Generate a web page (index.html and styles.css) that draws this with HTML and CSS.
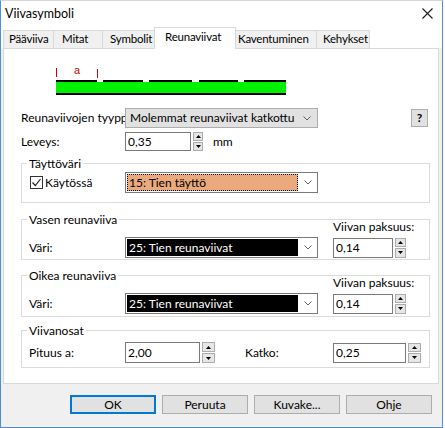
FILE: index.html
```html
<!DOCTYPE html>
<html>
<head>
<meta charset="utf-8">
<link rel="stylesheet" href="styles.css">
</head>
<body>
<div class="window">
  <div class="titlebar">
    <span class="title">Viivasymboli</span>
    <svg class="close" width="11" height="11" viewBox="0 0 11 11"><path d="M0.5 0.5 L10.5 10.5 M10.5 0.5 L0.5 10.5" stroke="#1a1a1a" stroke-width="1.1" fill="none"/></svg>
  </div>
  <div class="tabs">
    <div class="tab t1">Pääviiva</div>
    <div class="tab t2">Mitat</div>
    <div class="tab t3">Symbolit</div>
    <div class="tab t4 active">Reunaviivat</div>
    <div class="tab t5">Kaventuminen</div>
    <div class="tab t6">Kehykset</div>
  </div>
  <div class="panel">
    <svg class="preview" width="240" height="36" viewBox="0 0 240 36">
      <rect x="6" y="8" width="1" height="9" fill="#d40000"/>
      <text x="24" y="14" font-family="Liberation Sans, sans-serif" font-size="11" fill="#d40000">a</text>
      <rect x="47" y="9" width="1" height="9" fill="#d40000"/>
      <rect x="6" y="20" width="230" height="15" fill="#000"/>
      <rect x="6" y="22" width="230" height="11" fill="#00f000"/>
      <rect x="47" y="20" width="6" height="2" fill="#eef8ee"/>
      <rect x="93" y="20" width="6" height="2" fill="#eef8ee"/>
      <rect x="142" y="20" width="7" height="2" fill="#eef8ee"/>
      <rect x="188" y="20" width="6" height="2" fill="#eef8ee"/>
    </svg>

    <div class="row row-type">
      <span class="lbl lbl-top">Reunaviivojen tyypp</span>
      <div class="combo combo-gray">
        <span class="combo-text">Molemmat reunaviivat katkottu</span>
        <svg class="chev" width="8" height="5" viewBox="0 0 8 5"><path d="M0.5 0.5 L4 4 L7.5 0.5" stroke="#606060" fill="none"/></svg>
      </div>
      <div class="help">?</div>
    </div>

    <div class="row row-width">
      <span class="lbl lbl-top">Leveys:</span>
      <div class="spinfield sf-width">
        <div class="input">0,35</div>
        <div class="spinner sp-small">
          <div class="sbtn"><svg width="5" height="3" viewBox="0 0 5 3"><path d="M0 3 L2.5 0 L5 3Z" fill="#000"/></svg></div>
          <div class="sbtn"><svg width="5" height="3" viewBox="0 0 5 3"><path d="M0 0 L2.5 3 L5 0Z" fill="#000"/></svg></div>
        </div>
      </div>
      <span class="unit">mm</span>
    </div>

    <fieldset class="group g1">
      <legend>Täyttöväri</legend>
      <div class="grid">
        <div class="check">
          <span class="box"><svg width="11" height="11" viewBox="0 0 11 11"><path d="M1.5 5.5 L4.3 8.5 L9.5 2" stroke="#222" stroke-width="1.2" fill="none"/></svg></span>
          <span>Käytössä</span>
        </div>
        <div class="combo combo-color">
          <span class="swatch orange">15: Tien täyttö</span>
          <svg class="chev" width="8" height="5" viewBox="0 0 8 5"><path d="M0.5 0.5 L4 4 L7.5 0.5" stroke="#606060" fill="none"/></svg>
        </div>
      </div>
    </fieldset>

    <fieldset class="group g2">
      <legend>Vasen reunaviiva</legend>
      <div class="grid grid-two">
        <span class="lbl-thick">Viivan paksuus:</span>
        <span class="lbl">Väri:</span>
        <div class="combo combo-color">
          <span class="swatch black">25: Tien reunaviivat</span>
          <svg class="chev" width="8" height="5" viewBox="0 0 8 5"><path d="M0.5 0.5 L4 4 L7.5 0.5" stroke="#606060" fill="none"/></svg>
        </div>
        <div class="spinfield sf-thick">
          <div class="input">0,14</div>
          <div class="spinner">
            <div class="sbtn"><svg width="5" height="3" viewBox="0 0 5 3"><path d="M0 3 L2.5 0 L5 3Z" fill="#000"/></svg></div>
            <div class="sbtn"><svg width="5" height="3" viewBox="0 0 5 3"><path d="M0 0 L2.5 3 L5 0Z" fill="#000"/></svg></div>
          </div>
        </div>
      </div>
    </fieldset>

    <fieldset class="group g3">
      <legend>Oikea reunaviiva</legend>
      <div class="grid grid-two">
        <span class="lbl-thick">Viivan paksuus:</span>
        <span class="lbl">Väri:</span>
        <div class="combo combo-color">
          <span class="swatch black">25: Tien reunaviivat</span>
          <svg class="chev" width="8" height="5" viewBox="0 0 8 5"><path d="M0.5 0.5 L4 4 L7.5 0.5" stroke="#606060" fill="none"/></svg>
        </div>
        <div class="spinfield sf-thick">
          <div class="input">0,14</div>
          <div class="spinner">
            <div class="sbtn"><svg width="5" height="3" viewBox="0 0 5 3"><path d="M0 3 L2.5 0 L5 3Z" fill="#000"/></svg></div>
            <div class="sbtn"><svg width="5" height="3" viewBox="0 0 5 3"><path d="M0 0 L2.5 3 L5 0Z" fill="#000"/></svg></div>
          </div>
        </div>
      </div>
    </fieldset>

    <fieldset class="group g4">
      <legend>Viivanosat</legend>
      <div class="grid grid-parts">
        <span class="lbl">Pituus a:</span>
        <div class="spinfield sf-len">
          <div class="input">2,00</div>
          <div class="spinner">
            <div class="sbtn"><svg width="5" height="3" viewBox="0 0 5 3"><path d="M0 3 L2.5 0 L5 3Z" fill="#000"/></svg></div>
            <div class="sbtn"><svg width="5" height="3" viewBox="0 0 5 3"><path d="M0 0 L2.5 3 L5 0Z" fill="#000"/></svg></div>
          </div>
        </div>
        <span class="lbl lbl-katko">Katko:</span>
        <div class="spinfield sf-thick">
          <div class="input">0,25</div>
          <div class="spinner">
            <div class="sbtn"><svg width="5" height="3" viewBox="0 0 5 3"><path d="M0 3 L2.5 0 L5 3Z" fill="#000"/></svg></div>
            <div class="sbtn"><svg width="5" height="3" viewBox="0 0 5 3"><path d="M0 0 L2.5 3 L5 0Z" fill="#000"/></svg></div>
          </div>
        </div>
      </div>
    </fieldset>
  </div>

  <div class="buttons">
    <div class="btn default">OK</div>
    <div class="btn">Peruuta</div>
    <div class="btn">Kuvake...</div>
    <div class="btn">Ohje</div>
  </div>
</div>
</body>
</html>
```

FILE: styles.css
```css
* { box-sizing: border-box; }
html, body { margin: 0; padding: 0; }
body {
  width: 445px;
  height: 428px;
  overflow: hidden;
  background: #ffffff;
  font-family: Lato, "Liberation Sans", sans-serif;
  font-size: 12px;
  color: #000;
}
.window {
  width: 443px;
  height: 428px;
  border: 1px solid #4a90d9;
  border-top-color: #d6d6d6;
  background: #f0f0f0;
  display: flex;
  flex-direction: column;
}
.titlebar {
  height: 26px;
  background: #ffffff;
  display: flex;
  align-items: center;
  justify-content: space-between;
  padding: 0 9px 1px 4px;
  flex: none;
}
.title { font-size: 12.5px; line-height: 16px; }
.close { display: block; }

.tabs {
  height: 21px;
  display: flex;
  align-items: flex-end;
  padding-left: 2px;
  background: #ffffff;
  flex: none;
}
.tab {
  height: 18px;
  line-height: 16px;
  font-size: 11.5px;
  letter-spacing: -0.2px;
  background: #f0f0f0;
  border: 1px solid #d9d9d9;
  border-bottom: none;
  padding-left: 5px;
  white-space: nowrap;
  overflow: hidden;
  margin-left: -1px;
}
.t1 { width: 51px; margin-left: 0; }
.t2 { width: 50px; padding-left: 8px; }
.t3 { width: 54px; padding-left: 7px; }
.t4 { width: 82px; }
.t5 { width: 84px; padding-left: 4px; }
.t6 { width: 54px; padding-left: 6px; }
.tab.active {
  height: 22px;
  background: #ffffff;
  margin: 0 -2px -1px -2px;
  padding-left: 10px;
  line-height: 18px;
  position: relative;
  z-index: 1;
}

.panel {
  flex: none;
  height: 336px;
  margin: 0 3px 0 2px;
  background: #ffffff;
  border: 1px solid #d9d9d9;
  padding: 0;
}
.preview {
  display: block;
  margin: 11px 0 0 46px;
}

.row {
  display: flex;
  align-items: center;
  padding-left: 17px;
}
.row-type { height: 20px; margin-top: 12px; padding-right: 10px; }
.row-width { height: 19px; margin-top: 4px; }
.lbl { white-space: nowrap; line-height: 16px; }
.lbl-top { width: 104px; flex: none; }

.combo {
  width: 193px;
  height: 20px;
  display: flex;
  align-items: center;
  flex: none;
}
.combo-gray {
  background: #e1e1e1;
  border: 1px solid #adadad;
  padding: 0 6px 0 4px;
  justify-content: space-between;
}
.combo-text { line-height: 16px; white-space: nowrap; }
.chev { display: block; flex: none; }
.combo-color {
  height: 21px;
  background: #ffffff;
  border: 1px solid #7a7a7a;
  padding: 1px 5px 1px 1px;
  justify-content: space-between;
}
.swatch {
  width: 171px;
  height: 17px;
  line-height: 15px;
  padding-left: 1px;
  white-space: nowrap;
  overflow: hidden;
}
.swatch.orange {
  background: #eba97e;
  color: #000;
  border: 1px dotted #000;
}
.swatch.black {
  background: #000;
  color: #fff;
  border: 1px solid #000;
}

.help {
  margin-left: auto;
  width: 17px;
  height: 18px;
  background: #e1e1e1;
  border: 1px solid #adadad;
  font-weight: bold;
  font-size: 12px;
  line-height: 16px;
  text-align: center;
}

.spinfield {
  display: flex;
  gap: 2px;
  align-items: stretch;
}
.input {
  background: #ffffff;
  border: 1px solid #7a7a7a;
  padding-left: 2px;
  line-height: 16px;
  display: flex;
  align-items: center;
}
.sf-width { height: 19px; }
.sf-width .input { width: 66px; }
.sf-thick { height: 20px; }
.sf-thick .input { width: 73px; }
.sf-len { height: 21px; }
.sf-len .input { width: 75px; }
.spinner {
  width: 13px;
  display: flex;
  flex-direction: column;
  gap: 1px;
}
.sp-small { width: 10px; }
.sbtn {
  flex: 1;
  background: #e6e6e6;
  border: 1px solid #acacac;
  display: flex;
  align-items: center;
  justify-content: center;
}
.sbtn svg { display: block; }
.unit { margin-left: 10px; line-height: 16px; }

.group {
  margin: 0 8px 0 17px;
  border: 1px solid #dcdcdc;
  padding: 1px 8px 9px 7px;
  min-inline-size: 0;
}
.group legend {
  padding: 0 2px;
  margin-left: -2px;
  line-height: 15px;
  font-size: 12px;
}
.g1 { margin-top: 5px; }
.g2 { margin-top: 9px; padding: 0 8px 1px 7px; }
.g3 { margin-top: 8px; padding: 0 8px 2px 7px; }
.g4 { margin-top: 6px; padding: 4px 8px 4px 7px; }

.grid {
  display: grid;
  grid-template-columns: 96px 193px;
  align-items: center;
}
.grid-two {
  grid-template-columns: 96px 193px 88px;
  column-gap: 0;
  row-gap: 2px;
  margin-top: -8px;
}
.grid-two .lbl-thick {
  grid-column: 3;
  margin-left: 15px;
  line-height: 16px;
  white-space: nowrap;
}
.grid-two .spinfield { margin-left: 15px; }
.grid-parts {
  grid-template-columns: 96px 120px 88px auto;
}
.grid-parts .lbl-katko { justify-self: start; }

.check {
  display: flex;
  align-items: center;
  gap: 2px;
  padding-left: 1px;
}
.box {
  width: 13px;
  height: 13px;
  border: 1px solid #333;
  background: #fff;
  display: flex;
  align-items: center;
  justify-content: center;
}
.box svg { display: block; }

.buttons {
  display: flex;
  gap: 6px;
  padding-left: 69px;
  margin-top: 11px;
}
.btn {
  width: 86px;
  height: 19px;
  background: #e1e1e1;
  border: 1px solid #adadad;
  text-align: center;
  line-height: 17px;
}
.btn.default {
  border: 2px solid #0078d7;
  line-height: 15px;
}
```
